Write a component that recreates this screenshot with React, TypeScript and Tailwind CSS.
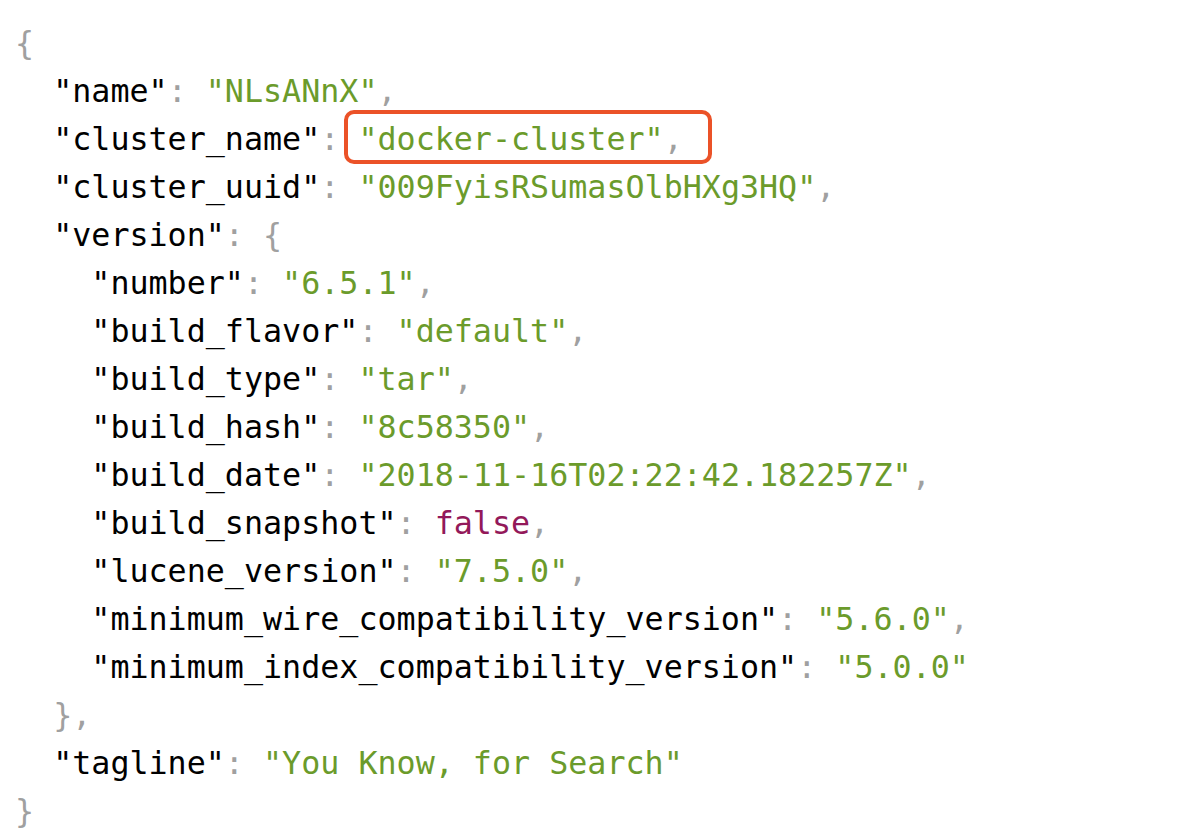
import React from "react";

type Tok = { t: string; c: "k" | "p" | "s" | "b" };

const K = (t: string): Tok => ({ t, c: "k" });
const P = (t: string): Tok => ({ t, c: "p" });
const S = (t: string): Tok => ({ t, c: "s" });
const B = (t: string): Tok => ({ t, c: "b" });

const cls: Record<Tok["c"], string> = {
  k: "text-[#000000]",
  p: "text-[#a0a0a0]",
  s: "text-[#6b9b2b]",
  b: "text-[#93195a]",
};

const Row = ({ indent, toks }: { indent: number; toks: Tok[] }) => (
  <div className="h-[48px] leading-[48px] whitespace-pre">
    {" ".repeat(indent)}
    {toks.map((tk, i) => (
      <span key={i} className={cls[tk.c]}>
        {tk.t}
      </span>
    ))}
  </div>
);

const kv = (k: string, v: string, comma = true, bool = false): Tok[] => {
  const r: Tok[] = [K(`"${k}"`), P(": "), bool ? B(v) : S(`"${v}"`)];
  if (comma) r.push(P(","));
  return r;
};

export default function App() {
  return (
    <div className="w-[1186px] h-[838px] bg-white overflow-hidden">
      <div
        className="pt-[19px] pl-[15px] text-[31.7px]"
        style={{ fontFamily: '"DejaVu Sans Mono", monospace' }}
      >
        <Row indent={0} toks={[P("{")]} />
        <Row indent={2} toks={kv("name", "NLsANnX")} />
        <div className="h-[48px] leading-[48px] whitespace-pre">
          {"  "}
          <span className={cls.k}>"cluster_name"</span>
          <span className={cls.p}>: </span>
          <span className="relative inline-block h-[48px] leading-[48px] align-top">
            <span className={cls.s}>"docker-cluster"</span>
            <span className={cls.p}>,</span>
            <span className="absolute -top-[5px] -bottom-[1px] -left-[14px] -right-[29px] border-[4px] border-[#eb5228] rounded-[10px]" />
          </span>
        </div>
        <Row indent={2} toks={kv("cluster_uuid", "009FyisRSumasOlbHXg3HQ")} />
        <Row indent={2} toks={[K('"version"'), P(": {")]} />
        <Row indent={4} toks={kv("number", "6.5.1")} />
        <Row indent={4} toks={kv("build_flavor", "default")} />
        <Row indent={4} toks={kv("build_type", "tar")} />
        <Row indent={4} toks={kv("build_hash", "8c58350")} />
        <Row indent={4} toks={kv("build_date", "2018-11-16T02:22:42.182257Z")} />
        <Row indent={4} toks={kv("build_snapshot", "false", true, true)} />
        <Row indent={4} toks={kv("lucene_version", "7.5.0")} />
        <Row indent={4} toks={kv("minimum_wire_compatibility_version", "5.6.0")} />
        <Row indent={4} toks={kv("minimum_index_compatibility_version", "5.0.0", false)} />
        <Row indent={2} toks={[P("},")]} />
        <Row indent={2} toks={kv("tagline", "You Know, for Search", false)} />
        <Row indent={0} toks={[P("}")]} />
      </div>
    </div>
  );
}
